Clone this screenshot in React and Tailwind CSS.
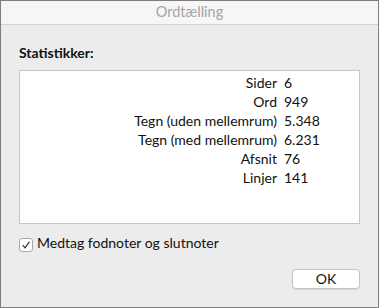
import React from 'react'

const stats = [
  ['Sider', '6'],
  ['Ord', '949'],
  ['Tegn (uden mellemrum)', '5.348'],
  ['Tegn (med mellemrum)', '6.231'],
  ['Afsnit', '76'],
  ['Linjer', '141'],
]

export default function App() {
  return (
    <div
      className="w-[379px] h-[308px] flex flex-col border border-[#7d7d7d] bg-[#ececec] text-[#111]"
      style={{ fontFamily: 'Lato, "Open Sans", sans-serif' }}
    >
      {/* Title bar */}
      <div className="h-[24px] shrink-0 flex items-center justify-center bg-[#f6f6f6] border-b border-[#d2d2d2]">
        <span className="text-[14.5px] leading-none text-[#a4a4a4]">Ordtælling</span>
      </div>

      <div className="flex-1 flex flex-col pl-[18px] pr-[18px]">
        <div className="mt-[18px] text-[14px] font-bold leading-[19px]">Statistikker:</div>

        <div className="mt-[8px] h-[154px] bg-white border border-[#c6c6c6] pt-[2px]">
          <div className="grid grid-cols-[257px_auto] gap-x-[7px] text-[14px] leading-[19px]">
            {stats.map(([label, value]) => (
              <React.Fragment key={label}>
                <div className="text-right">{label}</div>
                <div>{value}</div>
              </React.Fragment>
            ))}
          </div>
        </div>

        <label className="mt-[9px] flex items-start gap-[4px] text-[14px] leading-[19px]">
          <span className="mt-[5px] w-[14px] h-[14px] flex items-center justify-center bg-white border border-[#a9a9a9] rounded-[3px]">
            <svg width="10" height="10" viewBox="0 0 10 10">
              <path d="M1.8 5.2 L4 7.8 L8.4 1.8" fill="none" stroke="#333" strokeWidth="1.3" />
            </svg>
          </span>
          Medtag fodnoter og slutnoter
        </label>

        <div className="mt-[17px] flex justify-end">
          <button className="w-[68px] h-[20px] flex items-center justify-center bg-white border border-[#c3c3c3] rounded-[4px] shadow-[0_1px_1px_rgba(0,0,0,0.08)] text-[14px] leading-none text-[#111]">
            OK
          </button>
        </div>
      </div>
    </div>
  )
}
